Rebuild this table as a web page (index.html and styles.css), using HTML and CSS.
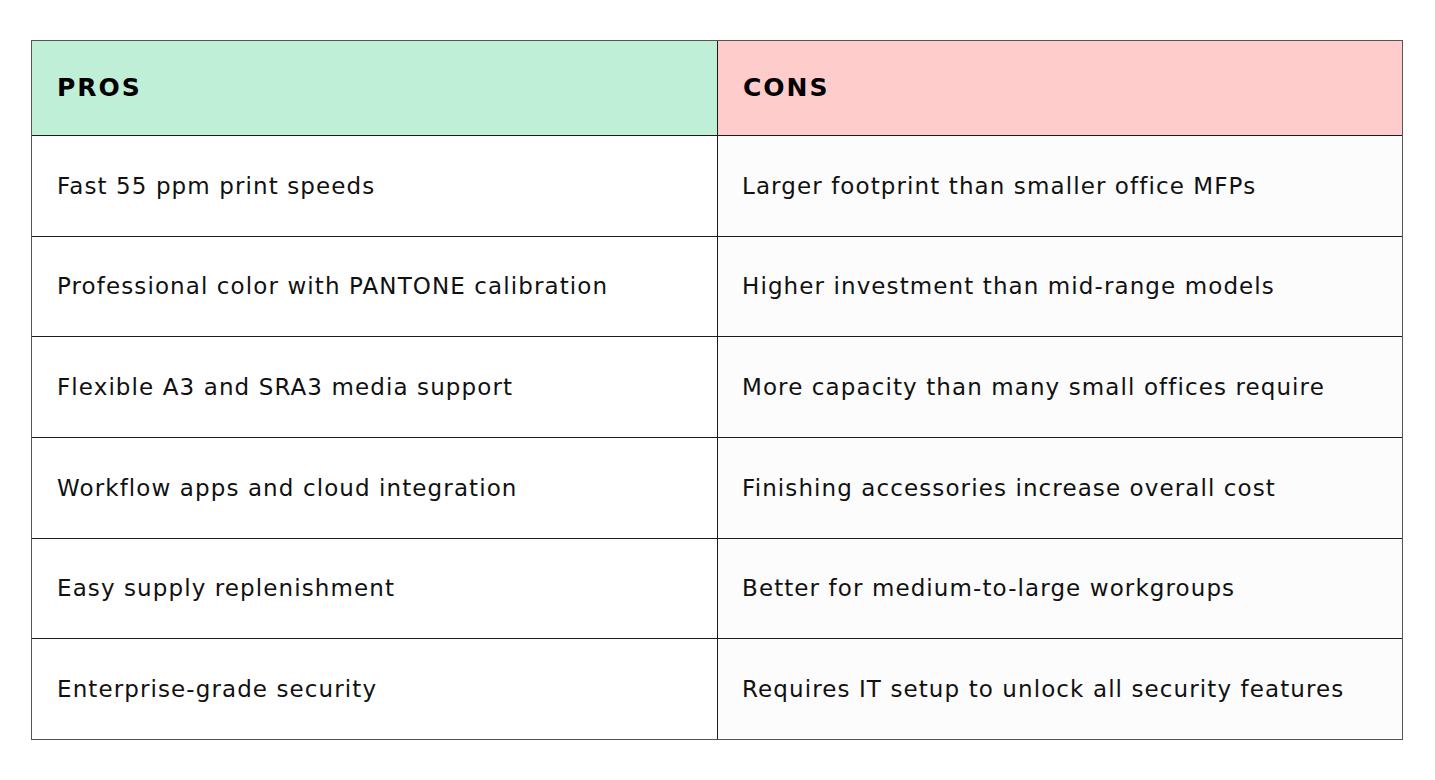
FILE: index.html
```html
<!DOCTYPE html>
<html>
<head>
<meta charset="utf-8">
<link rel="stylesheet" href="styles.css">
</head>
<body>
<div class="table">
  <div class="cell head pros">PROS</div>
  <div class="cell head cons">CONS</div>
  <div class="cell">Fast 55 ppm print speeds</div>
  <div class="cell alt">Larger footprint than smaller office MFPs</div>
  <div class="cell">Professional color with PANTONE calibration</div>
  <div class="cell alt">Higher investment than mid-range models</div>
  <div class="cell">Flexible A3 and SRA3 media support</div>
  <div class="cell alt">More capacity than many small offices require</div>
  <div class="cell">Workflow apps and cloud integration</div>
  <div class="cell alt">Finishing accessories increase overall cost</div>
  <div class="cell">Easy supply replenishment</div>
  <div class="cell alt">Better for medium-to-large workgroups</div>
  <div class="cell">Enterprise-grade security</div>
  <div class="cell alt">Requires IT setup to unlock all security features</div>
</div>
</body>
</html>
```
FILE: styles.css
```css
html, body {
  margin: 0;
  padding: 0;
  background: #ffffff;
}
body {
  padding: 40px 32px 0 31px;
  font-family: "DejaVu Sans", "Open Sans", sans-serif;
  color: #111111;
}
.table {
  width: 1372px;
  display: grid;
  grid-template-columns: 686px 1fr;
  grid-template-rows: 94px repeat(6, 100.67px);
  border: 1px solid #555555;
  box-sizing: border-box;
}
.cell {
  display: flex;
  align-items: center;
  padding-left: 25px;
  font-size: 23px;
  letter-spacing: 1.1px;
  border-top: 1px solid #1c1c1c;
  box-sizing: border-box;
  background: #ffffff;
}
.cell:nth-child(odd) {
  border-right: 1px solid #1c1c1c;
  padding-left: 25px;
}
.cell.alt {
  background: #fcfcfc;
  padding-left: 24px;
}
.head {
  border-top: none;
  font-weight: 700;
  font-size: 25px;
  letter-spacing: 2px;
  color: #000000;
  padding-bottom: 2px;
}
.pros {
  background: #c0efd8;
}
.cons {
  background: #ffcccc;
}
```
